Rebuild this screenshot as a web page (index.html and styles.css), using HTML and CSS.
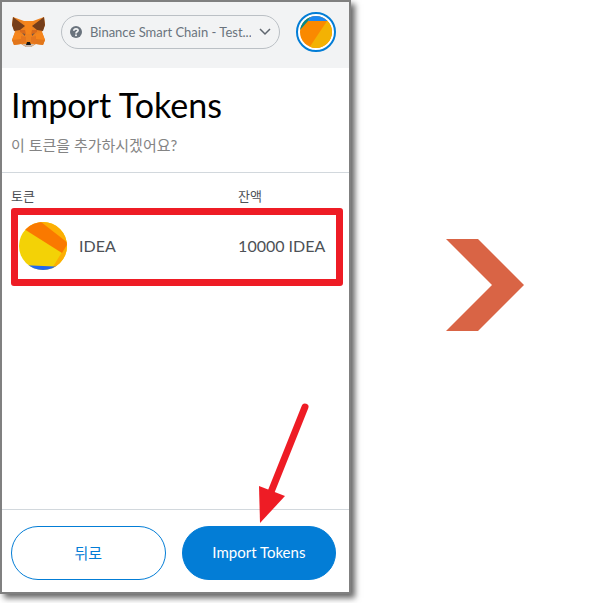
FILE: index.html
```html
<!DOCTYPE html>
<html lang="ko">
<head>
<meta charset="utf-8">
<meta name="viewport" content="width=device-width, initial-scale=1">
<title>Import Tokens</title>
<link rel="stylesheet" href="styles.css">
</head>
<body>
<main class="stage">
  <section class="wallet">
    <header class="topbar">
      <svg class="fox" viewBox="0 0 33 32" aria-hidden="true">
        <path fill="#ee821f" d="M1 1 12 5H21L32 1 33 9 30 16 33 24 31 29 24 28 19 31H14L9 28 2 29 0 24 3 16 0 9Z"/>
        <path fill="#f6851b" d="M12 5H21L19 18H14ZM3 16 9 18 9 27 0 24ZM30 16 24 18 24 27 33 24Z"/>
        <path fill="#e2761b" d="M0 24 9 23 9 28 2 29ZM33 24 24 23 24 28 31 29Z"/>
        <path fill="#763e1a" d="M1 1 13 10 8 14 2 15 0 9ZM32 1 20 10 25 14 31 15 33 9Z"/>
        <path fill="#d96a1b" d="M8 14 13 14 14 19 8 16ZM25 14 20 14 19 19 25 16Z"/>
        <path fill="#e4751f" d="M9 20 14 21 14 26 9 28ZM24 20 19 21 19 26 24 28Z"/>
        <path fill="#6d5347" d="M10 17 13 18 13 20ZM23 17 20 18 20 20Z"/>
        <path fill="#c9b9ae" d="M10 28 14 28H19L23 28 19 31H14Z"/>
        <path fill="#161616" d="M15 26H18L19 29H14Z"/>
      </svg>
      <button class="network" type="button">
        <svg class="help" viewBox="0 0 12 12" aria-hidden="true">
          <circle cx="6" cy="6" r="6" fill="#6a737d"/>
          <path d="M3.8 4.8C4 2 8.2 2.3 8.1 4.5 8 5.9 6 5.8 6 7.4" fill="none" stroke="#f2f3f4" stroke-width="1.7"/>
          <circle cx="6" cy="9.3" r="1" fill="#f2f3f4"/>
        </svg>
        <span class="network-name">Binance Smart Chain - Test...</span>
        <svg class="caret" viewBox="0 0 12 8" aria-hidden="true"><path d="M1 1 6 6 11 1" fill="none" stroke="#5f666e" stroke-width="1.5"/></svg>
      </button>
      <button class="account" type="button" aria-label="Account">
        <svg viewBox="0 0 32 32" aria-hidden="true">
          <clipPath id="account-clip"><circle cx="16" cy="16" r="16"/></clipPath>
          <g clip-path="url(#account-clip)">
            <path fill="#fa8900" d="M0 0H32V32H0Z"/>
            <path fill="#f3b203" d="M27 5 9 32H32V5Z"/>
            <path fill="#018a8c" d="M0 0H11L8 5 0 14Z"/>
            <path fill="#1b88f2" d="M11 0H32V5H8Z"/>
          </g>
        </svg>
      </button>
    </header>

    <div class="intro">
      <h1>Import Tokens</h1>
      <p>이 토큰을 추가하시겠어요?</p>
    </div>

    <div class="tokens">
      <table>
        <thead><tr><th class="name-col" scope="col">토큰</th><th scope="col">잔액</th></tr></thead>
        <tbody>
          <tr>
            <td>
              <div class="token">
                <svg class="token-icon" viewBox="0 0 48 48" aria-hidden="true">
                  <clipPath id="token-clip"><circle cx="24" cy="24" r="24"/></clipPath>
                  <g clip-path="url(#token-clip)">
                    <path fill="#f3d206" d="M0 0H48V48H0Z"/>
                    <path fill="#fcae03" d="M20 0H48V48H32L43 30Z"/>
                    <path fill="#fa7900" d="M0 0H22L49 21 43 31 5 7Z"/>
                    <path fill="#1f68f0" d="M0 43 48 45V48H0Z"/>
                  </g>
                </svg>
                <span>IDEA</span>
              </div>
            </td>
            <td>10000 IDEA</td>
          </tr>
        </tbody>
      </table>
      <div class="highlight"></div>
    </div>

    <footer class="actions">
      <button class="button outline" type="button">뒤로</button>
      <button class="button primary" type="button">Import Tokens</button>
      <svg class="pointer" viewBox="0 0 52 122" aria-hidden="true">
        <path d="M46 5 12 90" stroke="#ee1c25" stroke-width="7" stroke-linecap="round"/>
        <path d="M0 84 26 94 1 121Z" fill="#ee1c25"/>
      </svg>
    </footer>
  </section>

  <div class="next">
    <svg viewBox="0 0 78 92" aria-hidden="true"><path fill="#d96445" d="M0 0H32L78 46 32 92H0L46 46Z"/></svg>
  </div>
</main>
</body>
</html>
```
FILE: styles.css
```css
* {
  box-sizing: border-box;
}

body {
  margin: 0;
  background: #fff;
  color: #24292e;
  font-family: Lato, "Noto Sans CJK KR", sans-serif;
}

svg {
  display: block;
}

button {
  margin: 0;
  font-family: inherit;
  cursor: pointer;
}

.stage {
  display: grid;
  grid-template-columns: minmax(0, 7fr) minmax(0, 5fr);
  min-height: 100vh;
}

.wallet {
  display: flex;
  flex-direction: column;
  margin-bottom: 9px;
  border: 2px solid #808080;
  background: #fff;
  box-shadow: 4px 4px 6px rgba(0, 0, 0, 0.6);
}

.topbar {
  display: flex;
  align-items: center;
  gap: 16px;
  padding: 10px 13px 16px 10px;
  background: #f2f3f4;
}

.fox {
  flex: none;
  width: 33px;
  height: 32px;
}

.network {
  display: flex;
  flex: 1;
  align-items: center;
  gap: 8px;
  min-width: 0;
  height: 34px;
  padding: 0 8px;
  border: 1px solid #bbc0c5;
  border-radius: 17px;
  background: transparent;
  color: #6a737d;
  font-size: 13px;
}

.help {
  flex: none;
  width: 12px;
  height: 12px;
}

.network-name {
  flex: 1;
  min-width: 0;
  overflow: hidden;
  text-align: left;
  white-space: nowrap;
}

.caret {
  flex: none;
  width: 12px;
  height: 8px;
}

.account {
  flex: none;
  width: 40px;
  height: 40px;
  padding: 2px;
  border: 2px solid #037dd6;
  border-radius: 50%;
  background: #fff;
}

.intro {
  padding: 15px 9px 16px;
  border-bottom: 1px solid #d2d8dd;
}

h1 {
  margin: 0;
  color: #000;
  font-size: 34px;
  font-weight: 400;
  line-height: 44px;
}

.intro p {
  margin: 8px 0 0;
  color: #848484;
  font-size: 15px;
  line-height: 21px;
}

.tokens {
  position: relative;
  flex: 1;
  padding: 13px 9px;
}

table {
  width: 100%;
  border-collapse: collapse;
  table-layout: fixed;
}

th,
td {
  padding: 0;
  text-align: left;
  font-weight: 400;
}

th {
  color: #4d5156;
  font-size: 13px;
  line-height: 20px;
}

td {
  height: 79px;
  color: #4d5156;
  font-size: 16px;
}

.name-col {
  width: 69%;
}

.token {
  display: flex;
  align-items: center;
  gap: 12px;
  padding-left: 8px;
}

.token-icon {
  width: 48px;
  height: 48px;
}

.highlight {
  position: absolute;
  top: 35px;
  right: 6px;
  left: 9px;
  height: 78px;
  border: 7px solid #ee1c25;
  border-radius: 3px;
  pointer-events: none;
}

.actions {
  position: relative;
  display: grid;
  grid-template-columns: 1fr 1fr;
  gap: 16px;
  padding: 16px 13px 12px 9px;
  border-top: 1px solid #d2d8dd;
}

.button {
  height: 54px;
  padding: 0 8px 2px;
  border: 1px solid #037dd6;
  border-radius: 27px;
  font-size: 15px;
}

.outline {
  background: #fff;
  color: #037dd6;
}

.primary {
  background: #037dd6;
  color: #fff;
}

.pointer {
  position: absolute;
  right: 38px;
  bottom: 68px;
  width: 52px;
  height: 122px;
  pointer-events: none;
}

.next {
  display: flex;
  align-items: center;
  justify-content: center;
  padding: 0 0 34px 16px;
}

.next svg {
  width: 78px;
  height: 92px;
}
```
